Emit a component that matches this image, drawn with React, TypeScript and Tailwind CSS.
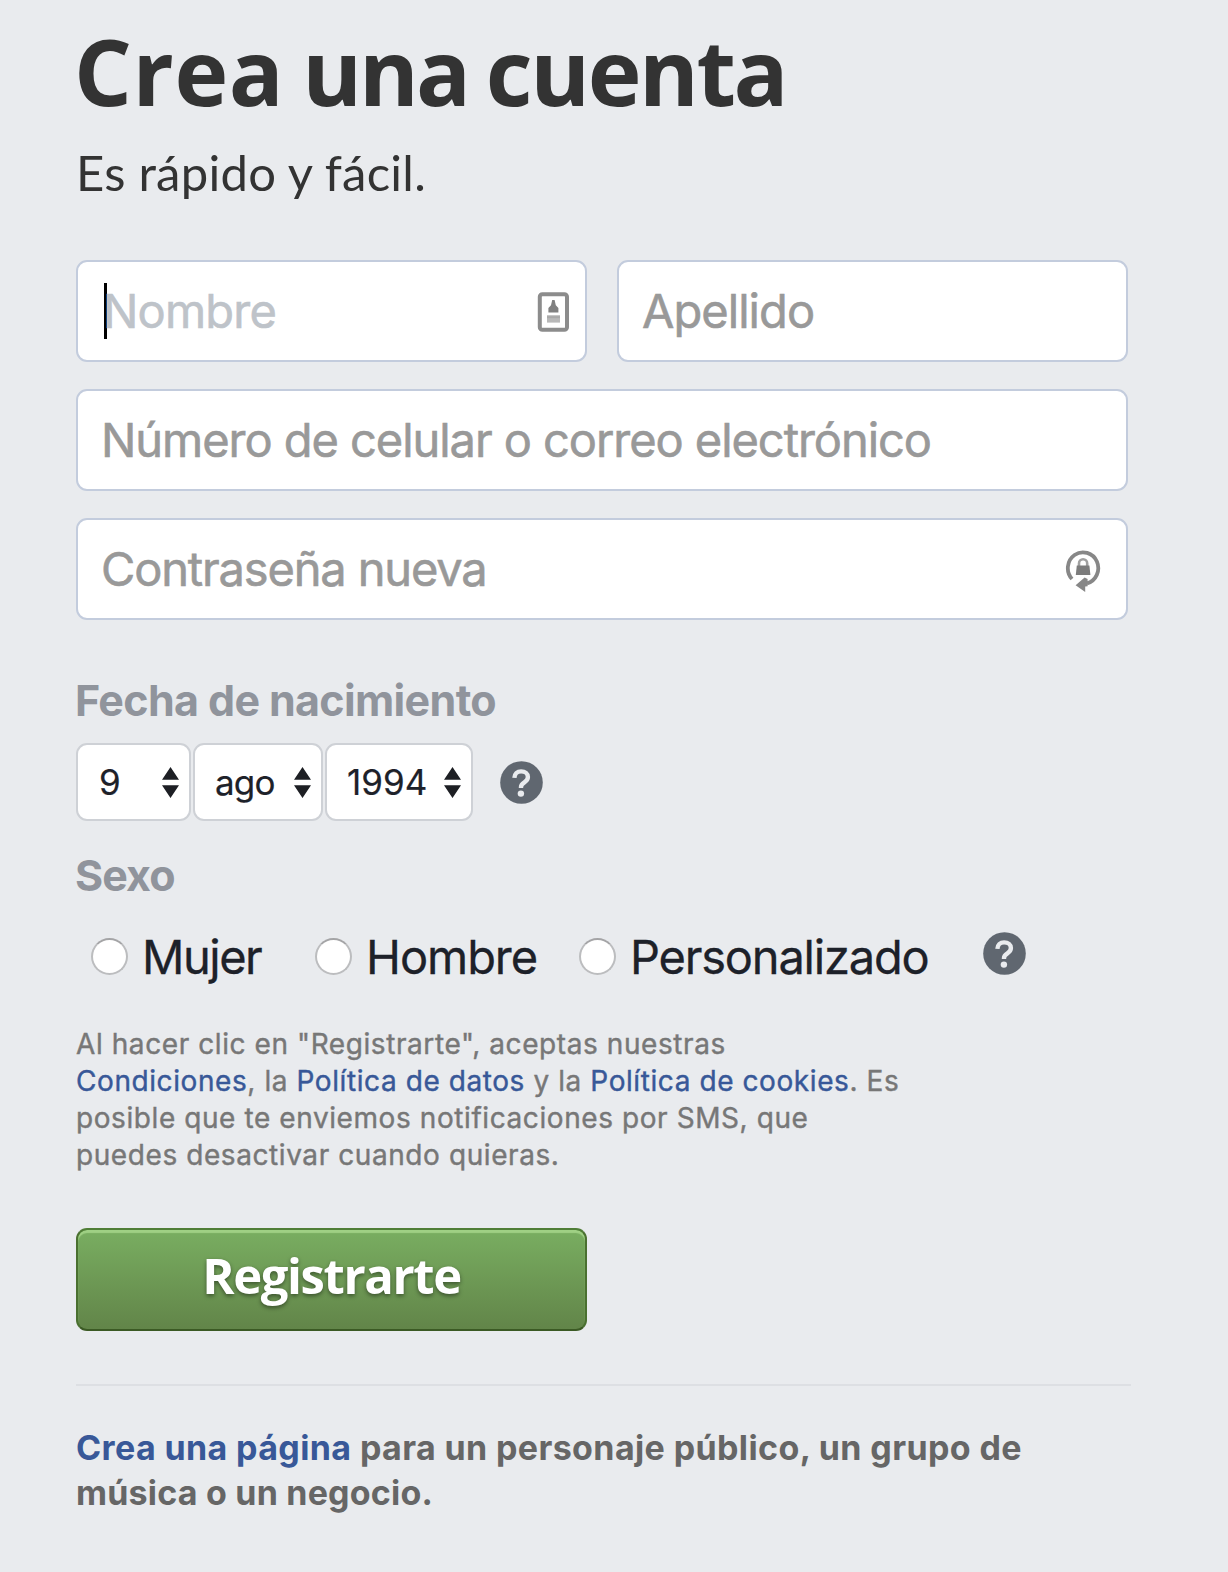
import type { ReactNode } from 'react';

function Field({ children, className = '' }: { children: ReactNode; className?: string }) {
  return (
    <div
      className={`relative flex h-[102px] items-center rounded-[11px] border-2 border-[#c3ccdd] bg-white text-[47px] leading-[60px] whitespace-nowrap text-[#999999] [-webkit-text-stroke:0.6px] ${className}`}
    >
      {children}
    </div>
  );
}

function ContactCardIcon() {
  return (
    <svg className="absolute top-[29px] right-[15.5px]" width="33" height="42" viewBox="0 0 33 42" fill="none">
      <rect x="2.8" y="3.2" width="27.2" height="35.6" rx="2.6" stroke="#8c8c8c" strokeWidth="4" />
      <path d="M15.200 9h2.400l1.200 5.200 2.600 2.800v4.400h-10V17l2.600-2.800z" fill="#808080" />
      <path d="M10 24.200h13v7.400H10z" fill="#b8b8b8" />
      <path d="M10 26.200h13" stroke="#a8a8a8" strokeWidth="2" />
    </svg>
  );
}

function PasswordIcon() {
  return (
    <svg className="absolute top-[27px] right-[25px]" width="36" height="46" viewBox="0 0 36 46" fill="none">
      <path d="M7 32A15.200 15.800 0 1 1 22 36.400" stroke="#878787" strokeWidth="3.800" />
      <path d="M10.600 38.200l9-7.800 3 1.600v7.200l-2.400.4v5.400z" fill="#878787" />
      <path d="M14 20v-3.600a4.100 4.100 0 0 1 8.200 0V20" stroke="#a0a0a0" strokeWidth="2.600" />
      <path d="M11.800 18.400h12.600l1 9.600H10.800z" fill="#7c7c7c" />
    </svg>
  );
}

function HelpIcon({ className = '' }: { className?: string }) {
  return (
    <svg className={className} width="43" height="43" viewBox="0 0 43 43" fill="none">
      <circle cx="21.500" cy="21.500" r="21.300" fill="#606770" />
      <path
        d="M14.400 16.800c.2-4 2.800-6.400 6.700-6.400 4 0 6.800 2.200 6.800 5.600 0 2.700-1.500 4-3.500 5.300-2.100 1.300-3.400 2.300-3.400 4.800v.9"
        stroke="#e9ebee"
        strokeWidth="4.400"
      />
      <circle cx="20.900" cy="32.600" r="3.200" fill="#e9ebee" />
    </svg>
  );
}

function Select({ children, className = '' }: { children: ReactNode; className?: string }) {
  return (
    <div
      className={`flex h-[78px] items-center justify-between rounded-[11px] border-2 border-[#ced1d6] bg-white pr-[10px] text-[35px] leading-[44px] text-[#1d2129] [-webkit-text-stroke:0.2px] ${className}`}
    >
      <span>{children}</span>
      <svg width="17" height="31" viewBox="0 0 17 31" fill="#1d1f24">
        <path d="M8.500 0L17 12.700H0zM8.500 31L0 18.300h17z" />
      </svg>
    </div>
  );
}

function Radio({ label, className = '', labelClass = '' }: { label: string; className?: string; labelClass?: string }) {
  return (
    <label className={`flex items-center ${className}`}>
      <span className="mr-[14px] size-[37px] shrink-0 rounded-full border-2 border-[#bcbdbf] border-t-[#a4a4a6] bg-white" />
      <span
        className={`relative top-[1px] text-[47px] leading-[60px] whitespace-nowrap text-[#1d2129] [-webkit-text-stroke:0.3px] ${labelClass}`}
      >
        {label}
      </span>
    </label>
  );
}

function Link({ children }: { children: ReactNode }) {
  return <a className="text-[#385898]">{children}</a>;
}

export default function App() {
  return (
    <main className="min-h-[1572px] w-[1228px] bg-[#e9ebee] pt-[21px] pr-[100px] pl-[76px] font-['Inter','Liberation_Sans',sans-serif]">
      <h1 className="-ml-[2px] font-['Open_Sans',sans-serif] text-[91px] leading-[100px] font-bold tracking-[-2.400px] [word-spacing:-3.500px] whitespace-nowrap text-[#333333]">
        <span className="tracking-[0.600px]">Crea</span> <span className="tracking-[-2.900px]">una</span> cuenta
      </h1>
      <p className="mt-[21px] font-['Lato',sans-serif] text-[49px] leading-[60px] tracking-[0.250px] text-[#333333]">
        Es rápido y fácil.
      </p>

      <form className="mt-[58px]">
        <div className="grid grid-cols-2 gap-x-[30px] gap-y-[27px]">
          <Field className="pl-[26px] tracking-[-0.800px]">
            <span className="h-[56px] w-[3px] bg-black" />
            <span className="-ml-[4px] text-[#bec3c9]">Nombre</span>
            <ContactCardIcon />
          </Field>
          <Field className="pl-[23px] tracking-[-0.950px]">Apellido</Field>
          <Field className="col-span-2 pl-[23px] tracking-[-1.050px]">Número de celular o correo electrónico</Field>
          <Field className="col-span-2 pl-[23px] tracking-[-1.150px]">
            Contraseña nueva
            <PasswordIcon />
          </Field>
        </div>

        <h2 className="mt-[55px] -ml-[1px] text-[43px] leading-[50px] font-bold tracking-[-0.650px] text-[#90949c]">
          Fecha de nacimiento
        </h2>
        <div className="mt-[18px] flex items-center">
          <Select className="w-[115px] pl-[21px]">9</Select>
          <Select className="ml-[2px] w-[130px] pl-[20px] tracking-[-0.800px]">ago</Select>
          <Select className="ml-[2px] w-[148px] pl-[20px]">1994</Select>
          <HelpIcon className="ml-[27px]" />
        </div>

        <h2 className="mt-[29px] -ml-[1px] text-[43px] leading-[50px] font-bold tracking-[-0.900px] text-[#90949c]">Sexo</h2>
        <div className="mt-[26px] flex h-[60px] items-center">
          <Radio label="Mujer" className="ml-[15px] w-[224px]" labelClass="tracking-[-1.500px]" />
          <Radio label="Hombre" className="w-[264px]" labelClass="tracking-[-1.050px]" />
          <Radio label="Personalizado" className="w-[404px]" labelClass="tracking-[-1.200px]" />
          <HelpIcon className="-mt-[5px] shrink-0" />
        </div>

        <p className="mt-[40px] text-[28px] leading-[37.100px] tracking-[0.580px] whitespace-nowrap text-[#777777] [-webkit-text-stroke:0.4px]">
          Al hacer clic en "Registrarte", aceptas nuestras
          <br />
          <Link>Condiciones</Link>, la <Link>Política de datos</Link> y la <Link>Política de cookies</Link>. Es
          <br />
          posible que te enviemos notificaciones por SMS, que
          <br />
          puedes desactivar cuando quieras.
        </p>

        <button
          type="button"
          className="mt-[54px] block h-[103px] w-[511px] rounded-[11px] border-2 border-[#4a7030] border-t-[#4f7d36] border-b-[#3b5a24] bg-linear-to-b from-[#79ae61] to-[#628549] pb-[9px] text-center font-['Open_Sans',sans-serif] text-[49px] leading-[60px] font-bold tracking-[-1.400px] text-white shadow-[inset_0_3px_1px_#9fd084] [text-shadow:0_2px_4px_rgba(0,0,0,0.45)]"
        >
          Registrarte
        </button>
      </form>

      <footer className="mt-[53px] w-[1055px] border-t-2 border-[#dddfe3] pt-[40px] text-[34px] leading-[44.600px] font-bold tracking-[0.380px] whitespace-nowrap text-[#666666]">
        <Link>Crea una página</Link> para un personaje público, un grupo de
        <br />
        <span className="tracking-[0.200px]">música o un negocio.</span>
      </footer>
    </main>
  );
}
